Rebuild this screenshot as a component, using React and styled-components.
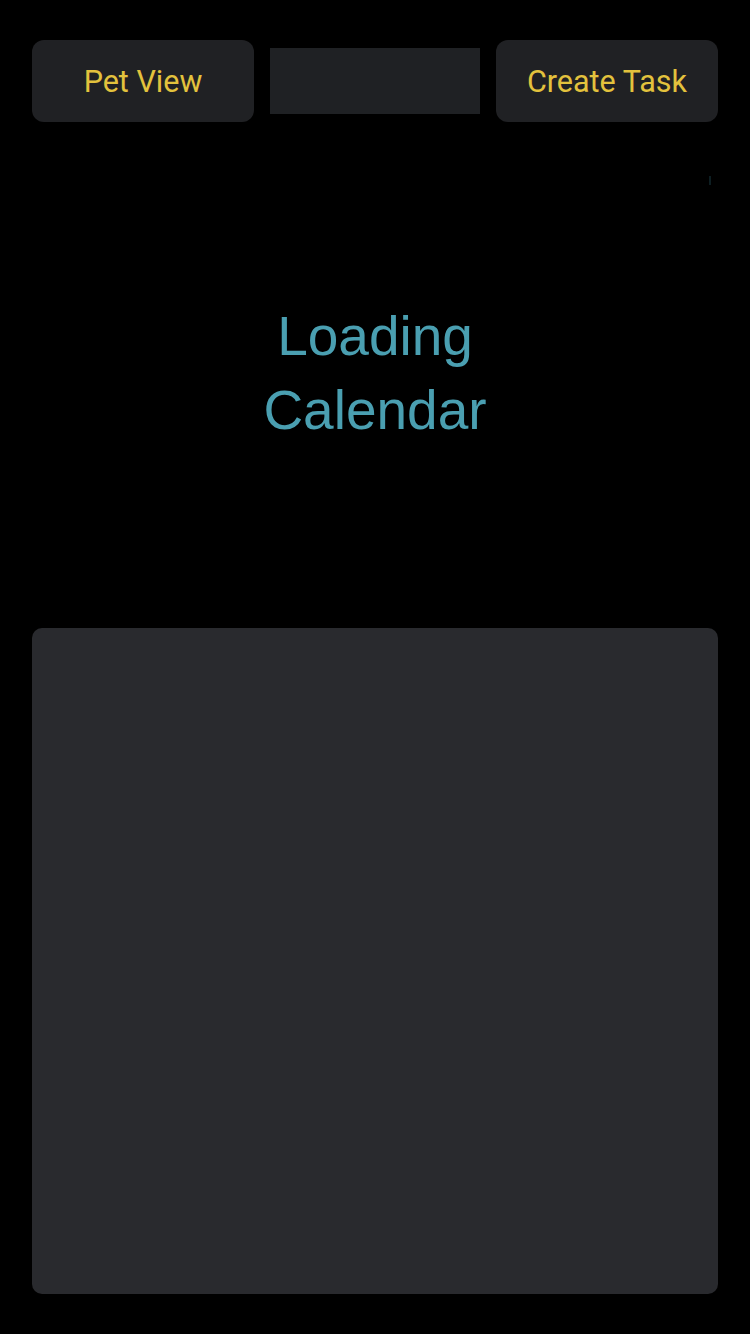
import React from "react";
import styled, { createGlobalStyle } from "styled-components";

const Global = createGlobalStyle`
  html, body { margin: 0; padding: 0; background: #000; }
  body { font-family: Roboto, "Liberation Sans", sans-serif; }
`;

const Page = styled.div`
  width: 750px;
  height: 1334px;
  box-sizing: border-box;
  padding: 40px 32px;
  display: flex;
  flex-direction: column;
  background: #000;
  position: relative;
`;

const Toolbar = styled.div`
  display: flex;
  align-items: center;
  gap: 16px;
  height: 82px;
`;

const ToolButton = styled.button`
  flex: 0 0 222px;
  height: 82px;
  border: none;
  border-radius: 12px;
  background: #202124;
  color: #e3c23d;
  font-family: Roboto, "Liberation Sans", sans-serif;
  font-size: 30.5px;
  padding: 0;
`;

const Placeholder = styled.div`
  flex: 1;
  height: 66px;
  background: #1f2124;
`;

const Middle = styled.div`
  height: 506px;
  display: flex;
  align-items: center;
  justify-content: center;
`;

const LoadingText = styled.div`
  width: 260px;
  text-align: center;
  color: #4a9fb1;
  font-family: "Liberation Sans", Arial, sans-serif;
  font-size: 55px;
  line-height: 74px;
  margin-top: -4px;
`;

const Panel = styled.div`
  height: 666px;
  border-radius: 10px;
  background: #292a2e;
`;

const ScrollMark = styled.div`
  position: absolute;
  left: 709px;
  top: 176px;
  width: 2px;
  height: 9px;
  background: #0d1e22;
`;

export default function App() {
  return (
    <>
      <Global />
      <Page>
        <Toolbar>
          <ToolButton>Pet View</ToolButton>
          <Placeholder />
          <ToolButton>Create Task</ToolButton>
        </Toolbar>
        <Middle>
          <LoadingText>Loading Calendar</LoadingText>
        </Middle>
        <Panel />
        <ScrollMark />
      </Page>
    </>
  );
}
